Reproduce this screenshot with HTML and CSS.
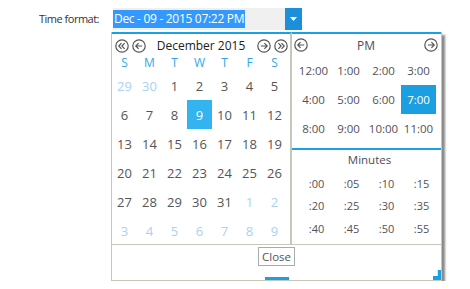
FILE: index.html
```html
<!DOCTYPE html>
<html lang="en">
<head>
  <meta charset="UTF-8" />
  <title>Time format</title>
  <link rel="stylesheet" href="styles.css">
</head>
<body>
  <div class="row">
    <span class="label">Time format:</span>

    <div class="picker">
      <div class="field">
        <span class="value"><span class="selected-text">Dec - 09 - 2015 07:22 PM</span></span>
        <span class="drop">
          <svg width="7" height="4" viewBox="0 0 7 4"><path d="M0 0h7L3.5 4z" fill="#fff"/></svg>
        </span>
      </div>

      <div class="popup">
        <div class="panes">
          <div class="calendar">
            <div class="head">
              <div class="nav">
                <span class="circle">
                  <svg width="14" height="14" viewBox="0 0 14 14"><circle cx="7" cy="7" r="6.2" fill="none" stroke="#555" stroke-width="1.2"/><path d="M6.5 4.2 3.8 7l2.7 2.8M9.6 4.2 6.9 7l2.7 2.8" fill="none" stroke="#555" stroke-width="1.2"/></svg>
                </span>
                <span class="circle">
                  <svg width="14" height="14" viewBox="0 0 14 14"><circle cx="7" cy="7" r="6.2" fill="none" stroke="#555" stroke-width="1.2"/><path d="M6.6 4.2 3.8 7l2.8 2.8M3.9 7h6.3" fill="none" stroke="#555" stroke-width="1.2"/></svg>
                </span>
              </div>
              <span class="title">December 2015</span>
              <div class="nav">
                <span class="circle">
                  <svg width="14" height="14" viewBox="0 0 14 14"><circle cx="7" cy="7" r="6.2" fill="none" stroke="#555" stroke-width="1.2"/><path d="M7.4 4.2 10.2 7l-2.8 2.8M10.1 7H3.8" fill="none" stroke="#555" stroke-width="1.2"/></svg>
                </span>
                <span class="circle">
                  <svg width="14" height="14" viewBox="0 0 14 14"><circle cx="7" cy="7" r="6.2" fill="none" stroke="#555" stroke-width="1.2"/><path d="M4.4 4.2 7.1 7 4.4 9.8M7.5 4.2 10.2 7 7.5 9.8" fill="none" stroke="#555" stroke-width="1.2"/></svg>
                </span>
              </div>
            </div>

            <div class="days">
              <span class="dow">S</span><span class="dow">M</span><span class="dow">T</span><span class="dow">W</span><span class="dow">T</span><span class="dow">F</span><span class="dow">S</span>

              <span class="day other">29</span><span class="day other">30</span><span class="day">1</span><span class="day">2</span><span class="day">3</span><span class="day">4</span><span class="day">5</span>
              <span class="day">6</span><span class="day">7</span><span class="day">8</span><span class="day active">9</span><span class="day">10</span><span class="day">11</span><span class="day">12</span>
              <span class="day">13</span><span class="day">14</span><span class="day">15</span><span class="day">16</span><span class="day">17</span><span class="day">18</span><span class="day">19</span>
              <span class="day">20</span><span class="day">21</span><span class="day">22</span><span class="day">23</span><span class="day">24</span><span class="day">25</span><span class="day">26</span>
              <span class="day">27</span><span class="day">28</span><span class="day">29</span><span class="day">30</span><span class="day">31</span><span class="day other">1</span><span class="day other">2</span>
              <span class="day other">3</span><span class="day other">4</span><span class="day other">5</span><span class="day other">6</span><span class="day other">7</span><span class="day other">8</span><span class="day other">9</span>
            </div>
          </div>

          <div class="time">
            <div class="hours-box">
              <div class="head">
                <span class="circle">
                  <svg width="14" height="14" viewBox="0 0 14 14"><circle cx="7" cy="7" r="6.2" fill="none" stroke="#555" stroke-width="1.2"/><path d="M6.6 4.2 3.8 7l2.8 2.8M3.9 7h6.3" fill="none" stroke="#555" stroke-width="1.2"/></svg>
                </span>
                <span class="title">PM</span>
                <span class="circle">
                  <svg width="14" height="14" viewBox="0 0 14 14"><circle cx="7" cy="7" r="6.2" fill="none" stroke="#555" stroke-width="1.2"/><path d="M7.4 4.2 10.2 7l-2.8 2.8M10.1 7H3.8" fill="none" stroke="#555" stroke-width="1.2"/></svg>
                </span>
              </div>
              <div class="hours">
                <span>12:00</span><span>1:00</span><span>2:00</span><span>3:00</span>
                <span>4:00</span><span>5:00</span><span>6:00</span><span class="active">7:00</span>
                <span>8:00</span><span>9:00</span><span>10:00</span><span>11:00</span>
              </div>
            </div>

            <div class="minutes-box">
              <div class="sub">Minutes</div>
              <div class="minutes">
                <span>:00</span><span>:05</span><span>:10</span><span>:15</span>
                <span>:20</span><span>:25</span><span>:30</span><span>:35</span>
                <span>:40</span><span>:45</span><span>:50</span><span>:55</span>
              </div>
            </div>
          </div>
        </div>

        <div class="foot">
          <button class="close">Close</button>
          <span class="foot-bar"></span>
          <span class="grip"></span>
        </div>
      </div>
    </div>
  </div>
</body>
</html>
```

FILE: styles.css
```css
* {
  margin: 0;
  padding: 0;
  box-sizing: border-box;
}

body {
  font-family: 'Open Sans', 'Noto Sans', sans-serif;
  background: #fff;
  color: #444;
}

.row {
  display: grid;
  grid-template-columns: 99px auto;
  column-gap: 12px;
  align-items: start;
  padding-top: 8px;
}

.label {
  font-size: 11px;
  letter-spacing: -0.5px;
  color: #333;
  line-height: 21px;
  text-align: right;
  white-space: nowrap;
}

.picker {
  display: flex;
  flex-direction: column;
}

/* input */
.field {
  display: flex;
  height: 22px;
  margin-left: 2px;
  width: 189px;
}

.value {
  flex: 1;
  background: #f0f0f0;
  display: flex;
  align-items: center;
}

.selected-text {
  background: #3399ff;
  color: #fff;
  font-size: 12px;
  line-height: 18px;
  padding: 0 1px;
  white-space: nowrap;
  letter-spacing: -0.3px;
}

.drop {
  width: 17px;
  background: #1b8fd9;
  display: flex;
  align-items: center;
  justify-content: center;
}

/* popup */
.popup {
  margin-top: 2px;
  width: 331px;
  border: 1px solid #c6c6b9;
  border-top: none;
  box-shadow: 3px 3px 2px #8a8a8a;
  background: #fff;
}

.panes {
  display: flex;
  height: 213px;
  border-bottom: 1px solid #c6c6b9;
}

.calendar {
  width: 180px;
  border-top: 2px solid #1ba1e2;
  border-right: 2px solid #c6c6b9;
}

.calendar .head {
  display: flex;
  align-items: center;
  justify-content: space-between;
  height: 21px;
  padding: 2px 2px 0 2px;
}

.nav {
  display: flex;
  gap: 2px;
}

.circle {
  display: flex;
  width: 15px;
  height: 15px;
  align-items: center;
  justify-content: center;
}

.title {
  font-size: 12px;
  color: #222;
}

.days {
  display: grid;
  grid-template-columns: repeat(7, 25px);
  grid-auto-rows: 29px;
  grid-template-rows: 16px;
}

.dow {
  font-size: 12px;
  color: #35a6e6;
  text-align: center;
  line-height: 16px;
}

.day {
  font-size: 13px;
  color: #555;
  display: flex;
  align-items: center;
  justify-content: center;
}

.day.other {
  color: #a9d2ef;
}

.day.active {
  background: #33b3f0;
  color: #fff;
}

/* time side */
.time {
  flex: 1;
  display: flex;
  flex-direction: column;
}

.hours-box {
  height: 118px;
  border-top: 2px solid #1ba1e2;
  border-bottom: 2px solid #1ba1e2;
}

.hours-box .head {
  display: flex;
  align-items: center;
  justify-content: space-between;
  height: 20px;
  padding: 2px 2px 0 1px;
}

.hours-box .title {
  color: #4f4a5c;
}

.hours {
  display: grid;
  grid-template-columns: repeat(4, 35px);
  grid-auto-rows: 29px;
  margin: 2px 0 0 4px;
}

.hours span,
.minutes span {
  display: flex;
  align-items: center;
  justify-content: center;
  font-size: 11.5px;
  color: #52505a;
}

.hours span.active {
  background: #1b9fe0;
  color: #fff;
}

.sub {
  font-size: 11.5px;
  color: #4f4a5c;
  text-align: center;
  height: 20px;
  line-height: 20px;
  padding-left: 6px;
}

.minutes {
  display: grid;
  grid-template-columns: repeat(4, 35px);
  grid-auto-rows: 22.5px;
  margin: 2px 0 0 7px;
}

.minutes span {
  font-size: 11px;
}

/* footer */
.foot {
  position: relative;
  height: 35px;
  display: flex;
  flex-direction: column;
  align-items: center;
}

.close {
  margin-top: 2px;
  font-family: 'Open Sans', 'Noto Sans', sans-serif;
  font-size: 11.5px;
  color: #555;
  background: #fff;
  border: 1px solid #aaa;
  height: 19px;
  padding: 0 3px;
}

.foot-bar {
  margin-top: auto;
  width: 24px;
  height: 3px;
  background: #1ba1e2;
}

.grip {
  position: absolute;
  right: 0;
  bottom: 0;
  width: 8px;
  height: 10px;
  background: #1ba1e2;
  clip-path: polygon(100% 0, 100% 100%, 0 100%, 0 60%, 60% 60%, 60% 0);
}
```
